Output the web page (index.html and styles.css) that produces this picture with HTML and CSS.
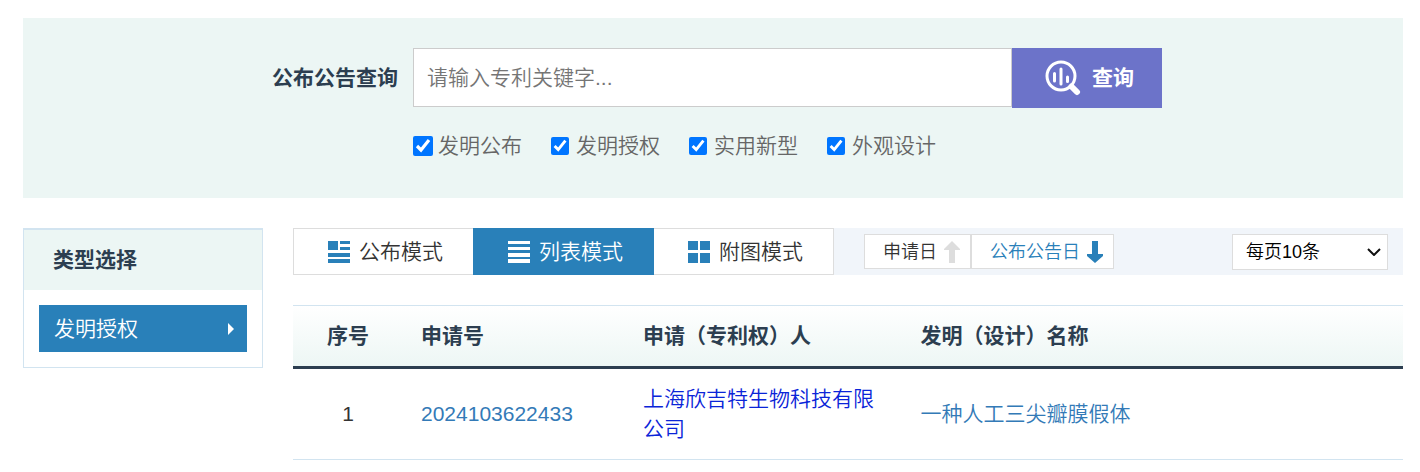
FILE: index.html
```html
<!DOCTYPE html>
<html lang="zh-CN">
<head>
<meta charset="utf-8">
<title>公布公告查询</title>
<link rel="stylesheet" href="styles.css">
</head>
<body>
<div class="page">
  <form class="search">
    <div class="search-inner">
      <label class="search-label" for="keyword">公布公告查询</label>
      <div class="search-bar">
        <input class="search-input" id="keyword" type="text" placeholder="请输入专利关键字...">
        <button class="search-button" type="button">
          <svg class="search-icon" viewBox="0 0 36 36" aria-hidden="true">
            <circle cx="16" cy="16" r="14" fill="none" stroke="#fff" stroke-width="3"/>
            <path d="M9.500 13.500V21M16 9v15M22.500 17v4.500" fill="none" stroke="#fff" stroke-width="3" stroke-linecap="round"/>
            <path d="M26.500 26.500l5.500 5.500" stroke="#fff" stroke-width="6" stroke-linecap="round"/>
          </svg>
          <span>查询</span>
        </button>
      </div>
      <div class="types">
        <label class="type"><input class="type-box type-box-first" type="checkbox" checked>发明公布</label>
        <label class="type"><input class="type-box" type="checkbox" checked>发明授权</label>
        <label class="type"><input class="type-box" type="checkbox" checked>实用新型</label>
        <label class="type"><input class="type-box" type="checkbox" checked>外观设计</label>
      </div>
    </div>
  </form>

  <div class="content">
    <aside class="side">
      <h2 class="side-title">类型选择</h2>
      <div class="side-body">
        <a class="side-link" href="#">发明授权
          <svg class="side-arrow" viewBox="0 0 6 12" aria-hidden="true"><path d="M0 0l6 6-6 6z" fill="#fff"/></svg>
        </a>
      </div>
    </aside>

    <main class="main">
      <div class="toolbar">
        <div class="tabs">
          <button class="tab" type="button">
            <svg class="tab-icon" viewBox="0 0 22 22" fill="currentColor" aria-hidden="true"><path d="M0 0h10v9H0zM12 0h10v3H12zM12 6h10v3H12zM0 12h22v4H0zM0 18h22v4H0z"/></svg>
            公布模式
          </button>
          <button class="tab tab-active" type="button">
            <svg class="tab-icon" viewBox="0 0 22 22" fill="currentColor" aria-hidden="true"><path d="M0 0h22v3H0zM0 6h22v3H0zM0 12h22v4H0zM0 18h22v4H0z"/></svg>
            列表模式
          </button>
          <button class="tab" type="button">
            <svg class="tab-icon" viewBox="0 0 22 22" fill="currentColor" aria-hidden="true"><path d="M0 0h10v9H0zM12 0h10v9H12zM0 12h10v10H0zM12 12h10v10H12z"/></svg>
            附图模式
          </button>
        </div>
        <div class="sorts">
          <button class="sort" type="button">申请日
            <svg class="sort-icon sort-icon-muted" viewBox="0 0 16 22" fill="currentColor" aria-hidden="true"><path d="M8 0l8 8v1h-5v13H5V9H0V8z"/></svg>
          </button>
          <button class="sort sort-active" type="button">公布公告日
            <svg class="sort-icon" viewBox="0 0 16 22" fill="currentColor" aria-hidden="true"><path d="M8 22l8-7v-2h-5V0H5v13H0v2z"/></svg>
          </button>
        </div>
        <div class="pager">
          <select class="page-size" aria-label="每页条数"><option>每页10条</option></select>
          <svg class="page-chevron" viewBox="0 0 14 8" aria-hidden="true"><path d="M1 1l6 6 6-6" fill="none" stroke="#111" stroke-width="2"/></svg>
        </div>
      </div>

      <table class="results">
        <thead>
          <tr>
            <th class="col-index">序号</th>
            <th class="col-number">申请号</th>
            <th class="col-owner">申请（专利权）人</th>
            <th>发明（设计）名称</th>
          </tr>
        </thead>
        <tbody>
          <tr>
            <td class="col-index">1</td>
            <td><a class="link" href="#">2024103622433</a></td>
            <td><a class="link link-owner" href="#">上海欣吉特生物科技有限公司</a></td>
            <td><a class="link" href="#">一种人工三尖瓣膜假体</a></td>
          </tr>
        </tbody>
      </table>
    </main>
  </div>
</div>
</body>
</html>
```
FILE: styles.css
```css
* {
  box-sizing: border-box;
}

body {
  margin: 0;
  background: #fff;
  color: #333;
  font: 350 21px/30px "Liberation Sans", "Noto Sans CJK SC", sans-serif;
}

button,
input,
select {
  margin: 0;
  font: inherit;
}

.page {
  padding: 18px 17px 12px 23px;
}

/* Search panel */
.search {
  padding: 30px 0 37px;
  background: #ecf6f4;
}

.search-inner {
  display: grid;
  grid-template-columns: 149px 1fr;
  row-gap: 23px;
  max-width: 898px;
  margin: 0 auto;
}

.search-label {
  padding-right: 15px;
  color: #2c3e50;
  font-weight: 700;
  line-height: 60px;
  text-align: right;
}

.search-bar {
  display: flex;
  height: 60px;
}

.search-input {
  flex: 1;
  min-width: 0;
  height: 59px;
  padding: 0 13px;
  border: 1px solid #ccc;
  border-radius: 0;
  background: #fff;
  outline: none;
}

.search-input::placeholder {
  color: #757575;
}

.search-button {
  display: flex;
  align-items: center;
  gap: 11px;
  width: 150px;
  padding: 0 0 0 33px;
  border: 0;
  background: #6c73c9;
  color: #fff;
  font-weight: 700;
}

.search-icon {
  width: 36px;
  height: 36px;
}

.types {
  display: flex;
  grid-column: 2;
  gap: 29px;
  color: #666;
}

.type {
  display: flex;
  align-items: center;
}

.type-box {
  width: 18px;
  height: 18px;
  margin-right: 7px;
}

.type-box-first {
  width: 20px;
  height: 20px;
  margin-right: 5px;
}

/* Side filter */
.content {
  display: flex;
  align-items: flex-start;
  gap: 30px;
  margin-top: 30px;
}

.side {
  flex: 0 0 240px;
  border: 1px solid #d2e4f0;
  border-top-width: 2px;
}

.side-title {
  margin: 0;
  padding: 15px 29px;
  background: #ecf6f4;
  color: #2c3e50;
  font-size: 21px;
  font-weight: 700;
}

.side-body {
  padding: 15px;
}

.side-link {
  display: flex;
  align-items: center;
  justify-content: space-between;
  height: 47px;
  padding: 0 13px 0 15px;
  background: #2980b9;
  color: #fff;
  text-decoration: none;
}

.side-arrow {
  width: 6px;
  height: 12px;
}

/* Toolbar */
.main {
  flex: 1;
  min-width: 0;
}

.toolbar {
  display: flex;
  align-items: center;
  height: 47px;
  background: #f1f5fa;
}

.tabs,
.sorts {
  display: flex;
}

.tab {
  display: flex;
  align-items: center;
  gap: 9px;
  height: 47px;
  padding: 0 30px 0 34px;
  border: 1px solid #ddd;
  background: #fff;
  color: #333;
  white-space: nowrap;
}

.tab + .tab {
  margin-left: -1px;
}

.tab-active {
  z-index: 1;
  border-color: #2980b9;
  background: #2980b9;
  color: #fff;
}

.tab-icon {
  width: 22px;
  height: 22px;
  color: #2980b9;
}

.tab-active .tab-icon {
  color: #fff;
}

.sorts {
  margin-left: 30px;
}

.sort {
  display: flex;
  align-items: center;
  gap: 7px;
  height: 35px;
  padding: 0 10px 0 18px;
  border: 1px solid #ddd;
  background: #fff;
  color: #333;
  font-size: 18px;
  white-space: nowrap;
}

.sort-active {
  color: #2980b9;
}

.sort-icon {
  width: 16px;
  height: 22px;
}

.sort-icon-muted {
  color: #ddd;
}

.pager {
  display: grid;
  align-items: center;
  margin: 0 15px 0 auto;
}

.page-size {
  grid-area: 1 / 1;
  width: 156px;
  height: 36px;
  padding: 0 30px 0 13px;
  border: 1px solid #ddd;
  border-radius: 0;
  appearance: none;
  background: #fff;
  color: #000;
  font-size: 18px;
}

.page-chevron {
  grid-area: 1 / 1;
  justify-self: end;
  width: 14px;
  height: 8px;
  margin-right: 7px;
  pointer-events: none;
}

/* Results */
.results {
  width: 100%;
  margin-top: 30px;
  border-collapse: separate;
  border-spacing: 0;
  table-layout: fixed;
}

.results thead {
  background: linear-gradient(#fff, #ecf6f4);
}

.results th,
.results td {
  padding: 15px 18px 15px 17px;
  text-align: left;
}

.results th {
  border-top: 1px solid #d2e4f0;
  border-bottom: 3px solid #2c3e50;
  color: #2c3e50;
  font-weight: 700;
}

.results td {
  border-bottom: 1px solid #d2e4f0;
}

.results .col-index {
  width: 10%;
  text-align: center;
}

.results .col-number {
  width: 20%;
}

.results .col-owner {
  width: 25%;
}

.link {
  color: #337ab7;
  text-decoration: none;
}

.link-owner {
  color: #0a24d8;
}
```
